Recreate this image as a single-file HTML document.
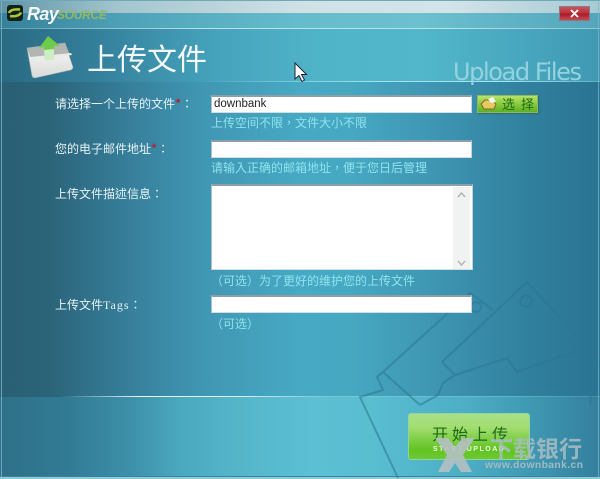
<!DOCTYPE html>
<html><head><meta charset="utf-8">
<style>
html,body{margin:0;padding:0;background:#fff}
#w{position:relative;width:600px;height:479px;overflow:hidden;font-family:"Liberation Sans","Noto Sans CJK TC",sans-serif;background:linear-gradient(90deg,#295f75 0,#2b6479 50px,#377f9b 130px,#4096b2 200px,#47a9c4 300px,#47a8c2 350px,#3c92af 450px,#30809d 530px,#2a7392 600px)}
.a{position:absolute;white-space:nowrap}
.l{color:#e6f2f5;font-size:12px;line-height:14px;left:55px;font-family:"Noto Sans CJK TC",sans-serif}
.h{color:#8fe3ee;font-size:12px;line-height:14px;left:212px;font-family:"Noto Sans CJK TC",sans-serif}
.i{position:absolute;left:211px;width:260px;background:#fff;border-top:2px solid #8b9fa8;border-left:1px solid #a8c0c8;border-right:1px solid #c0d4da;border-bottom:1px solid #cfe0e4;box-sizing:border-box}
s{color:#a8283a;text-decoration:none;font-weight:700}
</style></head><body>
<div id="w">
<div class="a" style="left:0;top:28px;width:600px;height:54px;background:linear-gradient(90deg,#2a6a82 0,#327b97 80px,#46a4bd 220px,#50b4c8 320px,#52b7ca 420px,#48a7be 520px,#3f98b2 600px)"></div>
<div class="a" style="left:0;top:0;width:600px;height:13px;background:linear-gradient(90deg,#5f95a6,#a4c6cf 120px,#cfe1e5 300px,#d3e4e8 450px,#a5c9d3)"></div>
<div class="a" style="left:0;top:13px;width:600px;height:15px;background:linear-gradient(90deg,#36809a,#4fa3b9 130px,#66bccc 300px,#6cc0cf 420px,#54a5bb)"></div>
<div class="a" style="left:0;top:28px;width:600px;height:1px;background:linear-gradient(90deg,#5e9db1,#b5e3ea 200px,#b5e3ea 450px,#8cc5d2)"></div>
<div class="a" style="left:200px;top:81px;width:400px;height:1px;background:linear-gradient(90deg,rgba(160,225,235,0) 0,#a5e2ea 180px,#a5e2ea 310px,rgba(160,225,235,.3))"></div>
<div class="a" style="left:0;top:397px;width:600px;height:82px;background:linear-gradient(90deg,#2e7088 0,#327b95 70px,#3d90a9 130px,#4aa8bf 180px,#55b6ca 240px,#5cbfd3 310px,#5abed1 370px,#4cadc4 470px,#3d95b0 540px,#347f9d 600px)"></div>
<div class="a" style="left:0;top:396px;width:600px;height:1px;background:linear-gradient(90deg,rgba(255,255,255,0) 60px,#e4f6f8 140px,#d4f0f4 240px,#7cc9d8 320px,#66b6c8 500px,rgba(120,200,215,.3))"></div>
<div class="a" style="left:0;top:476px;width:600px;height:3px;background:linear-gradient(#3a829c 0,#3a829c 33%,#8ccbd8 34%)"></div>
<svg class="a" style="left:0;top:0" width="600" height="479" viewBox="0 0 600 479" fill="none">
<g stroke="#2a7693" stroke-width="2" opacity=".55">
<path d="M420 405 L383 372 L470 293 L493 310"/>
<path d="M442 362 L527 282 L585 345"/>
<path d="M442 362 L455 375"/>
<path d="M455 375 L507 358 L517 372 L597 343"/>
<path d="M455 375 L443 383 L438 395 L420 405"/>
<path d="M383 372 L377 377 L383 390 L360 397 L398 478"/>
<path d="M596 344 L590 405"/>
<circle cx="526" cy="301" r="5.500"/>
<circle cx="476" cy="307" r="5"/>
</g>
</svg>
<!-- window edges -->
<div class="a" style="left:1px;top:0;width:1px;height:477px;background:#7fb6c4;opacity:.8"></div>
<div class="a" style="left:598px;top:0;width:1px;height:477px;background:#7fb6c4;opacity:.7"></div>
<div class="a" style="left:0;top:0;width:600px;height:1px;background:#6fa8b8"></div>
<!-- logo -->
<div class="a" style="left:7px;top:5px;width:16px;height:16px;background:#15201a;border-radius:3px"></div>
<svg class="a" style="left:8px;top:7px" width="14" height="12" viewBox="0 0 14 12"><path d="M1 6C2 3 6 2 12 2.500M2 9C8 10 12 8 13 5.500" stroke="#a3c93a" stroke-width="2.500" fill="none"/></svg>
<div class="a" style="left:27px;top:4px;font:italic bold 18px/20px 'Liberation Sans',sans-serif;color:#f2f6f4;letter-spacing:-.6px">Ray</div>
<div class="a" style="left:57px;top:9px;font:italic bold 12px/12px 'Liberation Sans',sans-serif;color:#8fb868;letter-spacing:-.3px">SOURCE</div>
<!-- close -->
<div class="a" style="left:559px;top:6px;width:31px;height:15px;box-sizing:border-box;border:1px solid #8a7a86;background:linear-gradient(#c8555f 0,#b8323c 45%,#a81c28 55%,#c64b52 100%)"></div>
<svg class="a" style="left:569px;top:9px" width="11" height="9" viewBox="0 0 11 9"><path d="M2 1L9 8M9 1L2 8" stroke="#fff" stroke-width="1.800"/></svg>
<!-- folder icon -->
<svg class="a" style="left:0;top:0" width="100" height="90" viewBox="0 0 100 90">
<defs><linearGradient id="b" x1="0" y1="0" x2="0" y2="1"><stop offset="0" stop-color="#fafafa"/><stop offset="1" stop-color="#d9dbd8"/></linearGradient></defs>
<path d="M27 48 L65 43 L73 67 Q73 69 71 70 L35 78 Q33 78 32 76 Z" fill="url(#b)" stroke="#8fa5a8" stroke-width=".6"/>
<path d="M27 48 L65 43 L70 55 L31 59Z" fill="#b2b5b1"/>
<path d="M30 57 L71 53 L72 55 L30 60Z" fill="#e8eae6"/>
<path d="M39 48 L48 36 L60 46 L54 46 L54 59 L45 60 L44 47Z" fill="#6fcc4a"/>
<path d="M44 50 L54 49 L54 59 L45 60Z" fill="#cdeec0"/>
</svg>
<div class="a" style="left:87px;top:37px;font:30px/40px 'Noto Sans CJK TC',sans-serif;color:#f3f9fa">上传文件</div>
<div class="a" style="left:453px;top:58px;font:24px/28px 'DejaVu Sans','Liberation Sans',sans-serif;color:#93d3df;letter-spacing:-1.400px">Upload Files</div>
<!-- cursor -->
<svg class="a" style="left:294px;top:62px" width="14" height="20" viewBox="0 0 14 20"><path d="M1 1V17L5 13.500L8 19.500L10.500 18L7.500 12.500H12.500Z" fill="#fff" stroke="#223" stroke-width="1"/></svg>
<!-- labels -->
<div class="a l" style="top:97px">请选择一个上传的文件<s>*</s>：</div>
<div class="a l" style="top:142px">您的电子邮件地址<s>*</s>：</div>
<div class="a l" style="top:187px">上传文件描述信息：</div>
<div class="a l" style="top:298px">上传文件<span style="font-family:'Liberation Serif',serif;letter-spacing:1px">Tags</span>：</div>
<!-- inputs -->
<div class="i" style="top:95px;height:18px;font:11.500px/15px 'Liberation Sans',sans-serif;color:#222;padding-left:2px;width:261px">downbank</div>
<div class="a h" style="top:116px;left:211px">上传空间不限，文件大小不限</div>
<div class="i" style="top:140px;height:18px;width:261px"></div>
<div class="a h" style="top:161px;left:211px">请输入正确的邮箱地址，便于您日后管理</div>
<div class="i" style="top:184px;height:86px;width:262px"></div>
<div class="a" style="left:453px;top:187px;width:17px;height:82px;background:#f1f3f3"></div>
<svg class="a" style="left:455px;top:190px" width="13" height="78" viewBox="0 0 13 78" fill="none" stroke="#b0b6b8" stroke-width="1.500"><path d="M3 7L6.500 3L10 7M3 71L6.500 75L10 71"/></svg>
<div class="a h" style="top:274px;left:211px">（可选）为了更好的维护您的上传文件</div>
<div class="i" style="top:295px;height:18px;width:261px"></div>
<div class="a h" style="top:317px;left:211px">（可选）</div>
<!-- select button -->
<div class="a" style="left:477px;top:95px;width:61px;height:18px;box-sizing:border-box;border:1px solid #8fb85a;background:linear-gradient(#b8e36a,#84c83a 55%,#5fae26);box-shadow:1px 1px 1px #2a6b7e;color:#1c6d14;font:13px/16px 'Noto Sans CJK TC',sans-serif;padding-left:24px;letter-spacing:6px">选择</div>
<svg class="a" style="left:480px;top:97px" width="18" height="14" viewBox="0 0 18 14"><path d="M1 7L5 3H12L16 7L14 12H4Z" fill="#e8c860" stroke="#7a6a20"/><path d="M8 2L13 0L16 5L11 6Z" fill="#f2f6f4"/></svg>
<!-- start button -->
<div class="a" style="left:408px;top:413px;width:122px;height:47px;box-sizing:border-box;border:1px solid #8fd6a0;border-radius:3px;background:linear-gradient(#a9e088 0,#a2dd70 30%,#7fd048 55%,#63c422 80%,#6ec832 100%)"></div>
<div class="a" style="left:432px;top:422px;font:16px/22px 'Noto Sans CJK TC',sans-serif;color:#1f6a18;letter-spacing:4px">开始上传</div>
<div class="a" style="left:433px;top:445px;font:bold 7px/9px 'Liberation Sans',sans-serif;color:#eef8e0;letter-spacing:1.500px">START UPLOAD</div>
<!-- watermark -->
<svg class="a" style="left:434px;top:437px" width="42" height="36" viewBox="0 0 42 36"><path d="M1 1H14L21 10L28 1H41L29 18L38 35H27L21 26L15 35H4L13 18Z" fill="#b4c0c2" opacity=".9"/></svg>
<div class="a" style="left:490px;top:433px;font:bold 23px/28px 'Noto Sans CJK TC',sans-serif;color:#a9bec5;opacity:.85">下载银行</div>
<div class="a" style="left:485px;top:460px;font:bold 10.300px/12px 'Liberation Sans',sans-serif;color:#a3bac2;letter-spacing:.4px">www.downbank.cn</div>
</div>
</body></html>
